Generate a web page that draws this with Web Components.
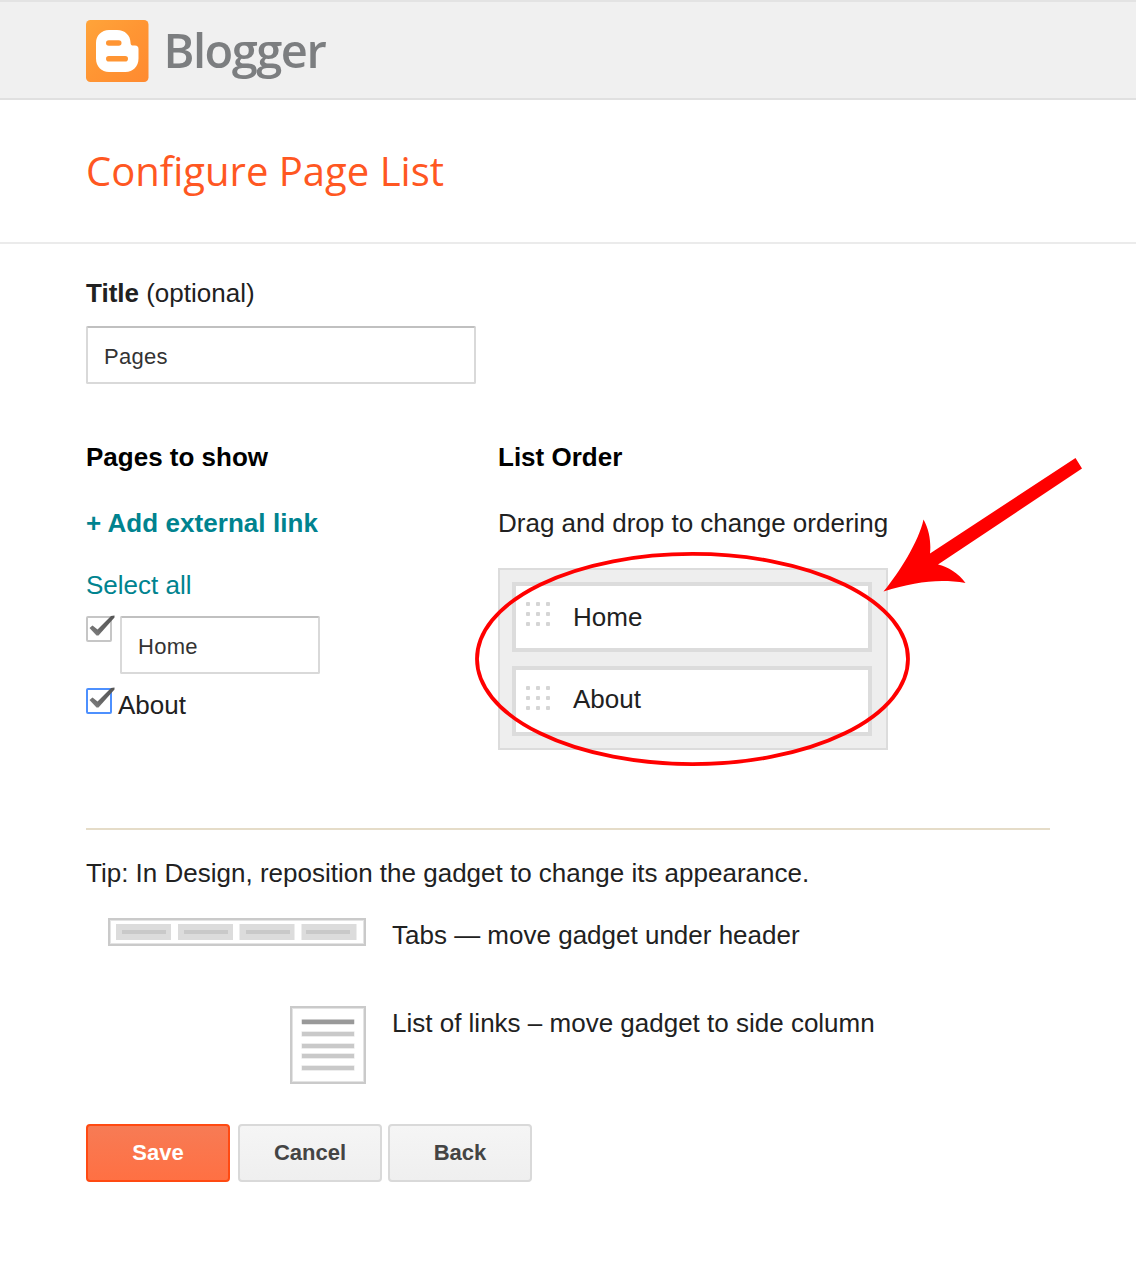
<!DOCTYPE html>
<html lang="en">
<head>
<meta charset="utf-8">
<title>Configure Page List</title>
<style>
html, body { margin: 0; background: #fff; }
body { font: 26px/30px "Liberation Sans", Arial, sans-serif; color: #212121; }
</style>
</head>
<body>
<configure-page></configure-page>
<script>
const define = (name, html) => customElements.define(name, class extends HTMLElement {
  constructor() {
    super();
    this.attachShadow({ mode: 'open' }).innerHTML = html;
  }
});

define('blogger-header', `
<style>
:host { display: flex; align-items: flex-start; box-sizing: border-box; height: 100px; padding: 18px 86px 0; background: #f0f0f0; border-top: 2px solid #e3e3e3; border-bottom: 2px solid #e0e0e0; }
svg { display: block; flex: none; }
span { margin: -1px 0 0 14.5px; font: 600 47px/62px "Open Sans", sans-serif; color: #7c7e80; letter-spacing: -1.5px; filter: blur(.6px); }
</style>
<svg width="63" height="63" viewBox="0 0 63 63">
  <defs><linearGradient id="g" x1="0" y1="0" x2="1" y2="1"><stop offset="0" stop-color="#ffa43a"/><stop offset=".5" stop-color="#ff9533"/><stop offset="1" stop-color="#ff8a30"/></linearGradient></defs>
  <rect width="62.5" height="62" rx="4.5" fill="url(#g)"/>
  <path fill="#fff" d="M23 10H31C39 10 44.5 15.5 44.5 22.5C44.5 25 45.5 25.5 47.5 25.5H49Q52.500 25.500 52.500 29V38.500C52.500 46.500 47 52 39.500 52H23C15.500 52 10 46.500 10 38.500V23C10 15.500 15.500 10 23 10Z"/>
  <rect x="20" y="20.200" width="15.500" height="5.600" rx="2.800" fill="#ff9533"/>
  <rect x="20" y="36" width="22" height="5.600" rx="2.800" fill="#ff9533"/>
</svg>
<span>Blogger</span>`);

define('page-heading', `
<style>
:host { display: block; box-sizing: border-box; height: 144px; padding: 43px 86px 0; border-bottom: 2px solid #ebebeb; }
h1 { margin: 0; font: 400 40px/56px "Open Sans", sans-serif; color: #ff5722; }
</style>
<h1><slot></slot></h1>`);

define('text-field', `
<style>
:host { display: block; box-sizing: border-box; height: 58px; padding: 16px 16px 0; background: #fff; border: 2px solid #d9d9d9; border-top-color: #c0c0c0; border-radius: 2px; font-size: 22px; line-height: 26px; letter-spacing: .3px; color: #333; }
</style><slot></slot>`);

define('check-box', `
<style>
:host { display: block; flex: none; width: 26px; height: 26px; --edge: #c6c6c6; }
:host([focused]) { --edge: #4d90fe; }
svg { display: block; overflow: visible; }
path { filter: blur(.5px); }
</style>
<svg width="26" height="26">
  <defs><linearGradient id="t" x1="0" y1="1" x2="1" y2="0"><stop offset="0" stop-color="#888"/><stop offset=".4" stop-color="#666"/><stop offset="1" stop-color="#555"/></linearGradient></defs>
  <rect x="1" y="1" width="24" height="24" rx="1" fill="#fff" style="stroke:var(--edge)" stroke-width="2"/>
  <path d="M3.500 12L6.500 9.500L11.500 13.500L25 0L28.500 -.5V1.500L12.500 19.500H10.500Z" fill="url(#t)"/>
</svg>`);

define('drag-item', `
<style>
:host { display: flex; box-sizing: border-box; height: 70px; border: 4px solid #dcdcdc; background: #fff; padding: 15px 0 0 10px; gap: 22px; }
svg { flex: none; display: block; }
div { line-height: 30px; margin-top: 1px; }
:host([last]) div { margin-top: -1px; }
</style>
<svg width="25" height="26" fill="#d5d5d5">
  <g id="r"><rect x="0" y="1" width="4" height="4" rx="1"/><rect x="10" y="1" width="4" height="4" rx="1"/><rect x="20" y="1" width="4" height="4" rx="1"/></g>
  <use href="#r" y="10"/><use href="#r" y="20"/>
</svg>
<div><slot></slot></div>`);

define('order-list', `
<style>
:host { display: flex; flex-direction: column; gap: 14px; box-sizing: border-box; width: 390px; height: 182px; padding: 12px 14px 12px 12px; border: 2px solid #dcdcdc; background: #eee; }
</style><slot></slot>`);

define('tabs-icon', `
<style>:host { display: block; } svg { display: block; }</style>
<svg width="258" height="28">
  <rect x="1.500" y="1.500" width="255" height="25" fill="#fff" stroke="#e4e4e4" stroke-width="3"/>
  <rect x="1" y="1" width="256" height="26" fill="none" stroke="#cacaca" stroke-width="2"/>
  <g fill="#dcdcdc"><rect x="8" y="6" width="55" height="16"/><rect x="70" y="6" width="55" height="16"/><rect x="131.500" y="6" width="55" height="16"/><rect x="193.500" y="6" width="55" height="16"/></g>
  <g fill="#c9c9c9"><rect x="14" y="12" width="44" height="4"/><rect x="76" y="12" width="44" height="4"/><rect x="138" y="12" width="44" height="4"/><rect x="198" y="12" width="44" height="4"/></g>
</svg>`);

define('links-icon', `
<style>:host { display: block; } svg { display: block; }</style>
<svg width="76" height="78">
  <rect x="1.500" y="1.500" width="73" height="75" fill="#fff" stroke="#e4e4e4" stroke-width="3"/>
  <rect x="1" y="1" width="74" height="76" fill="none" stroke="#cacaca" stroke-width="2"/>
  <rect x="11.500" y="13" width="53" height="5.500" rx="1" fill="#ccc"/><rect x="12" y="14" width="52" height="4" fill="#999"/>
  <g fill="#e6e6e6"><rect x="11.500" y="25.300" width="53" height="5.400"/><rect x="11.500" y="37.300" width="53" height="5.400"/><rect x="11.500" y="47.300" width="53" height="5.400"/><rect x="11.500" y="59.300" width="53" height="5.400"/></g>
  <g fill="#c9c9c9"><rect x="12" y="26" width="52" height="4"/><rect x="12" y="38" width="52" height="4"/><rect x="12" y="48" width="52" height="4"/><rect x="12" y="60" width="52" height="4"/></g>
</svg>`);

define('tip-row', `
<style>
:host { display: flex; align-items: flex-start; gap: 26px; }
.icon { width: 280px; display: flex; justify-content: flex-end; }
.label { padding-top: 2px; }
</style>
<div class="icon"><slot name="icon"></slot></div><div class="label"><slot></slot></div>`);

define('action-button', `
<style>
:host { display: block; box-sizing: border-box; width: 144px; height: 58px; border: 2px solid #d9d9d9; border-radius: 4px; background: linear-gradient(#f5f5f5, #efefef); color: #444; font-size: 22px; font-weight: 700; line-height: 54px; text-align: center; }
:host([primary]) { border-color: #ff4a12; background: linear-gradient(#f77b55, #ff7043); color: #fff; }
</style><slot></slot>`);

define('red-callout', `
<style>
:host { position: absolute; left: 470px; top: 440px; pointer-events: none; }
svg { display: block; }
</style>
<svg width="620" height="340" viewBox="470 440 620 340">
  <ellipse cx="692.500" cy="659" rx="215.500" ry="105.100" fill="none" stroke="#f00" stroke-width="3.800"/>
  <path fill="#f00" d="M883.500 591.500C899 573 919 541 923.500 519.500C930 531 931 544 930 553.500L1075.500 458L1082 468.500L938 564.500C948 567 958.500 573 965.500 583C938 578.500 915 582 883.500 591.500Z"/>
</svg>`);

define('configure-page', `
<style>
:host { display: block; position: relative; height: 1288px; overflow: hidden; }
main { padding: 34px 86px 0; }
.title-field { width: 390px; margin-top: 18px; }
.columns { display: flex; margin-top: 58px; height: 388px; box-sizing: border-box; border-bottom: 2px solid #e5dcc8; }
.left { width: 412px; }
h2 { margin: 0; font-size: 26px; line-height: 30px; color: #000; }
.add { margin-top: 36px; font-weight: 700; color: #00838f; letter-spacing: .05px; }
.all { margin-top: 32px; color: #00838f; }
.check { display: flex; margin-top: 16px; gap: 8px; }
.check text-field { width: 200px; }
.about { margin-top: 14px; gap: 6px; }
.about div { padding-top: 2px; }
.drag { margin-top: 36px; }
order-list { margin-top: 30px; }
.tip { margin-top: 28px; }
.tabs { margin-top: 30px; }
.links { margin-top: 56px; }
.actions { display: flex; margin-top: 40px; }
.actions .cancel { margin: 0 6px 0 8px; }
</style>
<blogger-header></blogger-header>
<page-heading>Configure Page List</page-heading>
<main>
  <div><b>Title</b> (optional)</div>
  <text-field class="title-field">Pages</text-field>
  <div class="columns">
    <section class="left">
      <h2>Pages to show</h2>
      <div class="add">+ Add external link</div>
      <div class="all">Select all</div>
      <div class="check"><check-box></check-box><text-field>Home</text-field></div>
      <div class="check about"><check-box focused></check-box><div>About</div></div>
    </section>
    <section>
      <h2>List Order</h2>
      <div class="drag">Drag and drop to change ordering</div>
      <order-list><drag-item>Home</drag-item><drag-item last>About</drag-item></order-list>
    </section>
  </div>
  <div class="tip">Tip: In Design, reposition the gadget to change its appearance.</div>
  <tip-row class="tabs"><tabs-icon slot="icon"></tabs-icon>Tabs — move gadget under header</tip-row>
  <tip-row class="links"><links-icon slot="icon"></links-icon>List of links – move gadget to side column</tip-row>
  <div class="actions"><action-button primary>Save</action-button><action-button class="cancel">Cancel</action-button><action-button>Back</action-button></div>
</main>
<red-callout></red-callout>`);
</script>
</body>
</html>
